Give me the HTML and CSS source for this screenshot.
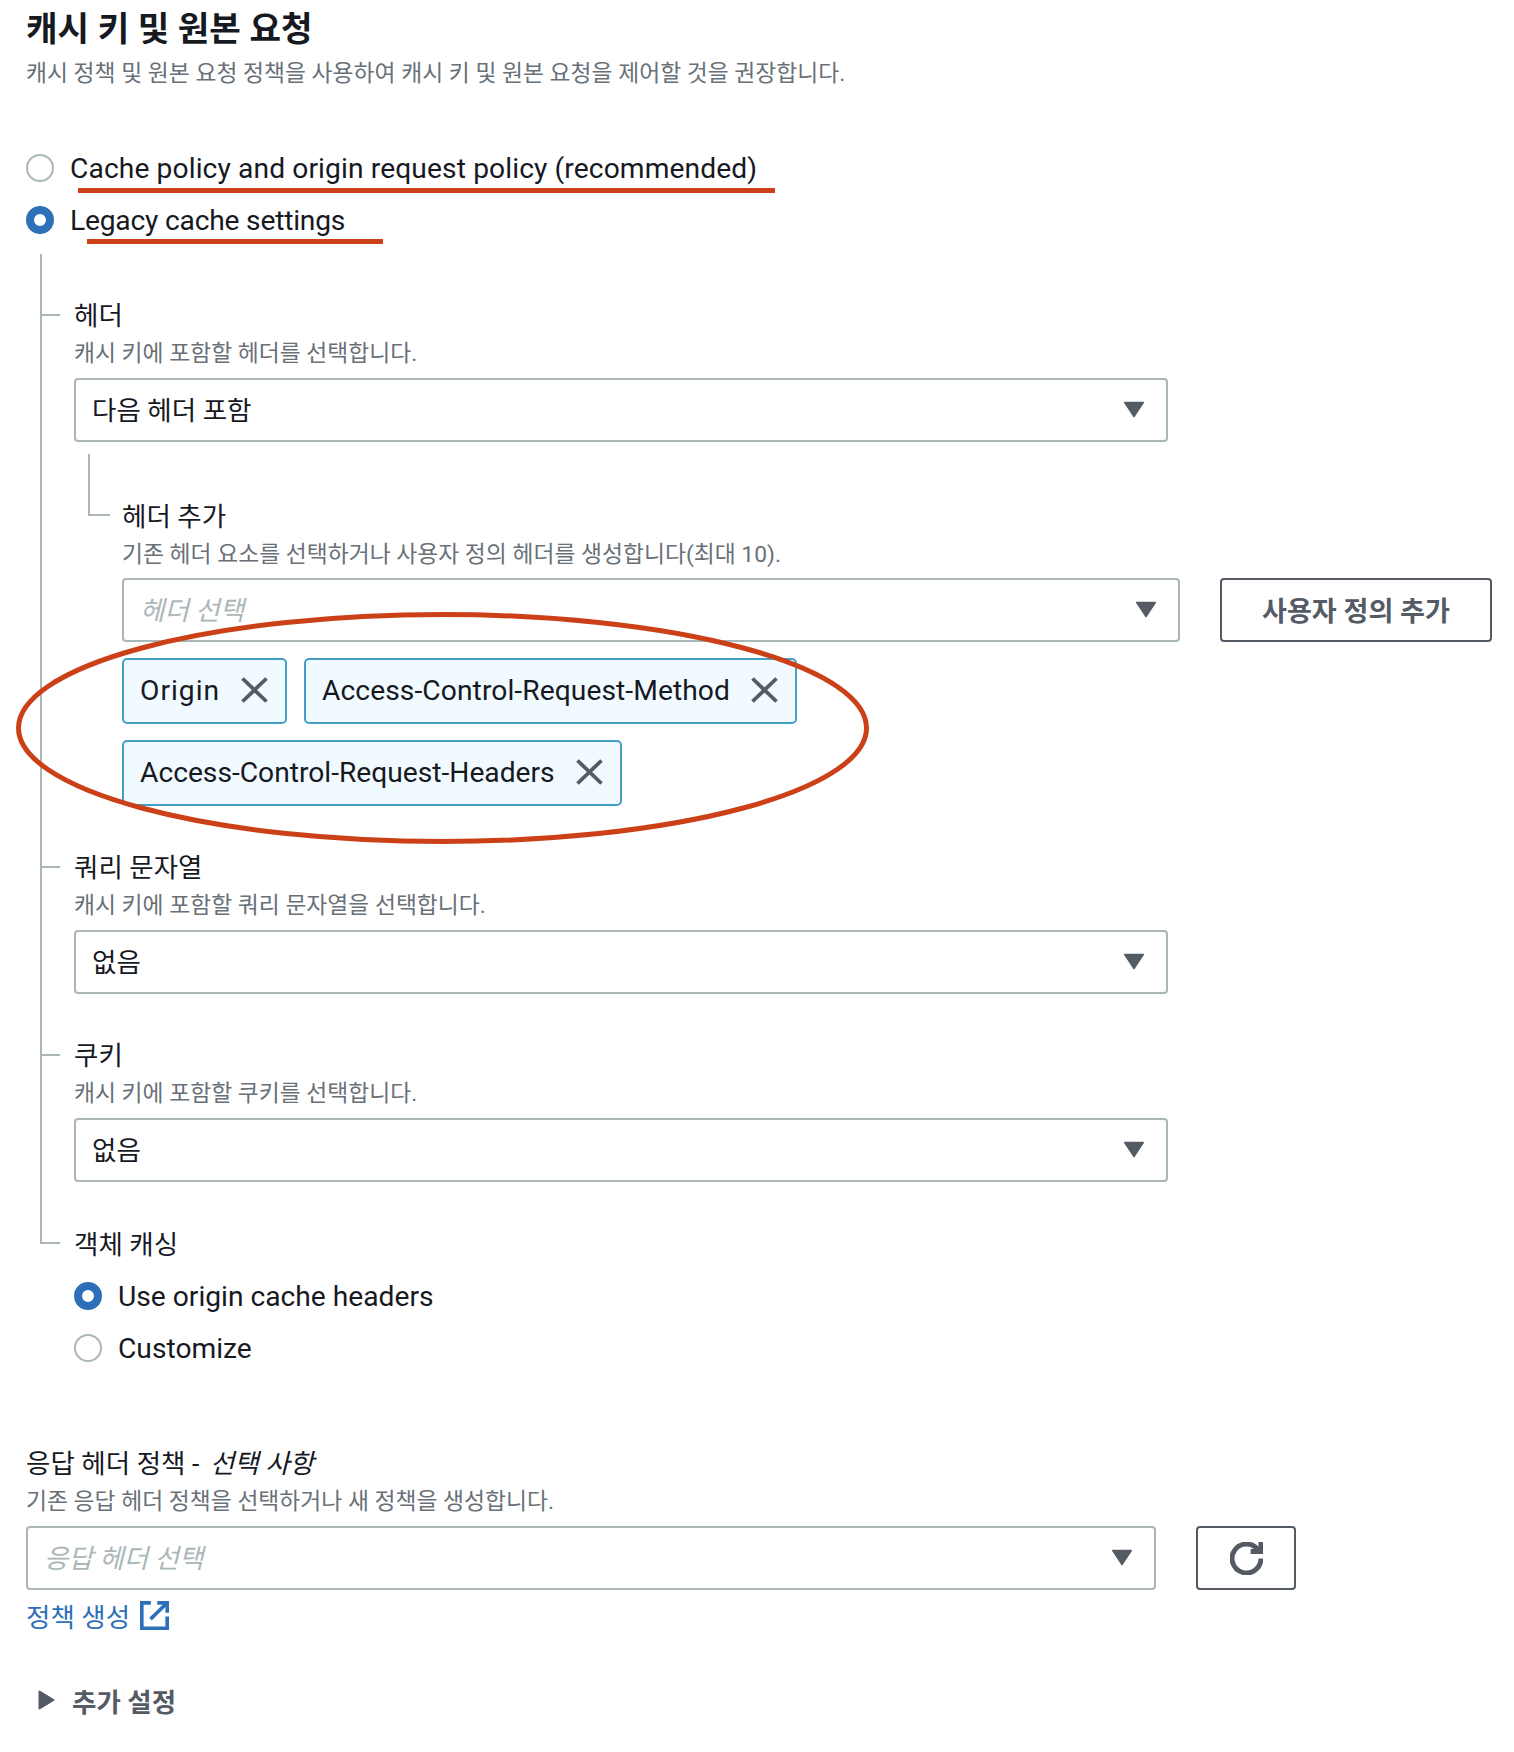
FILE: index.html
```html
<!DOCTYPE html>
<html lang="ko">
<head>
    <meta charset="UTF-8">
    <meta name="viewport" content="width=device-width, initial-scale=1.0">
    <title>캐시 키 및 원본 요청</title>
    <link rel="stylesheet" href="styles.css">
</head>
<body>
<div class="page">

    <h1 class="title">캐시 키 및 원본 요청</h1>
    <p class="desc">캐시 정책 및 원본 요청 정책을 사용하여 캐시 키 및 원본 요청을 제어할 것을 권장합니다.</p>

    <!-- 캐시 설정 방식 -->
    <div class="radio-group top-group">
        <div class="radio-row">
            <span class="radio"></span>
            <span class="radio-label label-wide">Cache policy and origin request policy (recommended)<i class="mark mark-one"></i></span>
        </div>
        <div class="radio-row">
            <span class="radio checked"></span>
            <span class="radio-label label-tight">Legacy cache settings<i class="mark mark-two"></i></span>
        </div>
    </div>

    <div class="tree">
        <!-- 헤더 -->
        <section class="tree-item">
            <div class="label">헤더</div>
            <div class="hint">캐시 키에 포함할 헤더를 선택합니다.</div>
            <div class="select main-select">
                <span>다음 헤더 포함</span>
                <svg class="caret" viewBox="0 0 16 16"><path d="M4.3 5h7.4L8 10.6z"/></svg>
            </div>

            <div class="sub-item">
                <div class="label">헤더 추가</div>
                <div class="hint">기존 헤더 요소를 선택하거나 사용자 정의 헤더를 생성합니다(최대 10).</div>
                <div class="select-row">
                    <div class="select sub-select placeholder">
                        <span>헤더 선택</span>
                        <svg class="caret" viewBox="0 0 16 16"><path d="M4.3 5h7.4L8 10.6z"/></svg>
                    </div>
                    <button class="btn add-btn">사용자 정의 추가</button>
                </div>
                <div class="tokens">
                    <div class="token token-short">
                        <span>Origin</span>
                        <svg class="close" viewBox="0 0 27 26"><path d="M1.500 1.500l24 23M25.500 1.500l-24 23"/></svg>
                    </div>
                    <div class="token token-long">
                        <span>Access-Control-Request-Method</span>
                        <svg class="close" viewBox="0 0 27 26"><path d="M1.500 1.500l24 23M25.500 1.500l-24 23"/></svg>
                    </div>
                    <div class="token">
                        <span>Access-Control-Request-Headers</span>
                        <svg class="close" viewBox="0 0 27 26"><path d="M1.500 1.500l24 23M25.500 1.500l-24 23"/></svg>
                    </div>
                </div>
            </div>
        </section>

        <!-- 쿼리 문자열 -->
        <section class="tree-item">
            <div class="label">쿼리 문자열</div>
            <div class="hint">캐시 키에 포함할 쿼리 문자열을 선택합니다.</div>
            <div class="select main-select">
                <span>없음</span>
                <svg class="caret" viewBox="0 0 16 16"><path d="M4.3 5h7.4L8 10.6z"/></svg>
            </div>
        </section>

        <!-- 쿠키 -->
        <section class="tree-item">
            <div class="label">쿠키</div>
            <div class="hint">캐시 키에 포함할 쿠키를 선택합니다.</div>
            <div class="select main-select">
                <span>없음</span>
                <svg class="caret" viewBox="0 0 16 16"><path d="M4.3 5h7.4L8 10.6z"/></svg>
            </div>
        </section>

        <!-- 객체 캐싱 -->
        <section class="tree-item last">
            <div class="label">객체 캐싱</div>
            <div class="radio-group inner-group">
                <div class="radio-row">
                    <span class="radio checked"></span>
                    <span class="radio-label">Use origin cache headers</span>
                </div>
                <div class="radio-row">
                    <span class="radio"></span>
                    <span class="radio-label">Customize</span>
                </div>
            </div>
        </section>
    </div>

    <!-- 응답 헤더 정책 -->
    <section class="response">
        <div class="label">응답 헤더 정책 - <em>선택 사항</em></div>
        <div class="hint">기존 응답 헤더 정책을 선택하거나 새 정책을 생성합니다.</div>
        <div class="select-row">
            <div class="select response-select placeholder">
                <span>응답 헤더 선택</span>
                <svg class="caret" viewBox="0 0 16 16"><path d="M4.3 5h7.4L8 10.6z"/></svg>
            </div>
            <button class="btn refresh-btn">
                <svg class="refresh" viewBox="0 0 16 16"><path d="M15 8a7 7 0 1 1-1.4-4.2"/><path d="M10 4.600h5V0"/></svg>
            </button>
        </div>
        <a class="link" href="#">정책 생성
            <svg class="external" viewBox="0 0 16 16"><path d="M6 1H1v14h14V8.500"/><path d="M9.500 1H15v5.500"/><path d="M5.800 10L15 1"/></svg>
        </a>
    </section>

    <div class="more">
        <svg class="more-caret" viewBox="0 0 17 20"><path d="M1.500 1.500v17l14-8.500z"/></svg>
        <span>추가 설정</span>
    </div>

    <!-- 빨간 타원 표시 -->
    <svg class="oval" viewBox="0 0 857 234"><ellipse cx="428.500" cy="117" rx="424" ry="113.500"/></svg>
</div>
</body>
</html>
```

FILE: styles.css
```css
body {
    font-family: Roboto, 'Noto Sans CJK KR', sans-serif;
    background-color: #fff;
    color: #16191f;
    margin: 0;
    padding: 0;
}
.page {
    position: relative;
    height: 1752px;
    padding: 7px 0 0 26px;
    box-sizing: border-box;
    overflow: hidden;
}
.title {
    margin: 0;
    font-size: 34.3px;
    line-height: 44px;
    font-weight: 700;
}
.desc {
    margin: 5px 0 0;
    font-size: 22.8px;
    line-height: 36px;
    color: #687078;
}
.radio-group {
    display: flex;
    flex-direction: column;
    gap: 8px;
}
.top-group {
    margin-top: 54px;
}
.inner-group {
    margin-top: 9px;
}
.radio-row {
    display: flex;
    align-items: center;
    height: 44px;
    gap: 16px;
}
.radio {
    width: 28px;
    height: 28px;
    box-sizing: border-box;
    border: 2px solid #aab7b8;
    border-radius: 50%;
    background-color: #fff;
}
.radio.checked {
    border: 8px solid #2d70b8;
}
.radio-label {
    position: relative;
    padding-top: 2px;
    font-size: 28.2px;
    line-height: 44px;
}
.label-wide {
    letter-spacing: 0.11px;
}
.label-tight {
    letter-spacing: -0.2px;
}
.mark {
    position: absolute;
    height: 5px;
    background-color: #cc4018;
}
.mark-one {
    left: 8px;
    top: 43px;
    width: 697px;
}
.mark-two {
    left: 17px;
    top: 42px;
    width: 296px;
}

/* 트리 */
.tree {
    margin: 12px 0 0 14px;
}
.tree-item {
    position: relative;
    padding: 41px 0 0 34px;
}
.tree-item.last {
    padding-top: 42px;
}
.tree-item::before {
    content: "";
    position: absolute;
    left: 0;
    top: 0;
    bottom: 0;
    border-left: 2px solid #aab7b8;
}
.tree-item.last::before {
    bottom: auto;
    height: 61px;
}
.tree-item::after {
    content: "";
    position: absolute;
    left: 0;
    top: 60px;
    width: 20px;
    border-top: 2px solid #aab7b8;
}
.label {
    font-size: 26.5px;
    line-height: 41px;
}
.label em {
    margin-left: 4px;
    font-style: italic;
}
.hint {
    font-size: 22.8px;
    line-height: 36px;
    color: #687078;
}
.select {
    display: flex;
    align-items: center;
    justify-content: space-between;
    height: 64px;
    box-sizing: border-box;
    border: 2px solid #aab7b8;
    border-radius: 4px;
    padding: 0 12px 4px 16px;
    font-size: 26.5px;
}
.placeholder {
    color: #aab7b8;
    font-style: italic;
}
.caret {
    width: 40px;
    height: 40px;
    margin-bottom: -4px;
    fill: #545b64;
    stroke: #545b64;
    stroke-width: 0.6;
    stroke-linejoin: round;
}
.main-select {
    width: 1094px;
    margin-top: 6px;
}
.select-row {
    display: flex;
    gap: 40px;
    margin-top: 5px;
}
.response .select-row {
    margin-top: 6px;
}
.sub-select {
    width: 1058px;
}
.response-select {
    width: 1130px;
}
.btn {
    display: flex;
    align-items: center;
    justify-content: center;
    height: 64px;
    box-sizing: border-box;
    padding: 0 0 2px;
    background-color: #fff;
    border: 2px solid #545b64;
    border-radius: 4px;
    color: #545b64;
    font-family: inherit;
    font-size: 27.1px;
    font-weight: 700;
}
.add-btn {
    width: 272px;
}
.refresh-btn {
    width: 100px;
    padding: 0;
}
.refresh {
    width: 33px;
    height: 33px;
    fill: none;
    stroke: #545b64;
    stroke-width: 2.4;
}

/* 하위 항목 */
.sub-item {
    position: relative;
    margin-top: 12px;
    padding: 42px 0 0 48px;
}
.sub-item::before {
    content: "";
    position: absolute;
    left: 14px;
    top: 0;
    width: 20px;
    height: 60px;
    border-left: 2px solid #aab7b8;
    border-bottom: 2px solid #aab7b8;
}
.tokens {
    display: flex;
    flex-wrap: wrap;
    gap: 16px 17px;
    width: 720px;
    margin-top: 16px;
}
.token {
    display: flex;
    align-items: center;
    gap: 21px;
    height: 66px;
    box-sizing: border-box;
    padding: 0 17px 2px 16px;
    background-color: #f1faff;
    border: 2px solid #44a0c9;
    border-radius: 5px;
    font-size: 28.2px;
}
.token-short span {
    letter-spacing: 1px;
}
.token-long span {
    letter-spacing: 0.08px;
}
.close {
    width: 27px;
    height: 26px;
    fill: none;
    stroke: #545b64;
    stroke-width: 3.8;
}

/* 응답 헤더 정책 */
.response {
    margin-top: 73px;
}
.link {
    display: flex;
    align-items: center;
    gap: 10px;
    margin-top: 5px;
    height: 40px;
    color: #2d70b8;
    font-size: 26.5px;
    text-decoration: none;
}
.external {
    width: 29px;
    height: 29px;
    fill: none;
    stroke: #2d70b8;
    stroke-width: 2;
}
.more {
    display: flex;
    align-items: center;
    gap: 17px;
    margin: 45px 0 0 12px;
    height: 40px;
    color: #545b64;
    font-size: 26.5px;
    font-weight: 700;
}
.more-caret {
    width: 17px;
    height: 20px;
    fill: #545b64;
    stroke: #545b64;
    stroke-linejoin: round;
    stroke-width: 2;
}
.oval {
    position: absolute;
    left: 14px;
    top: 611px;
    width: 857px;
    height: 234px;
    fill: none;
    stroke: #cc4018;
    stroke-width: 5;
}
```
